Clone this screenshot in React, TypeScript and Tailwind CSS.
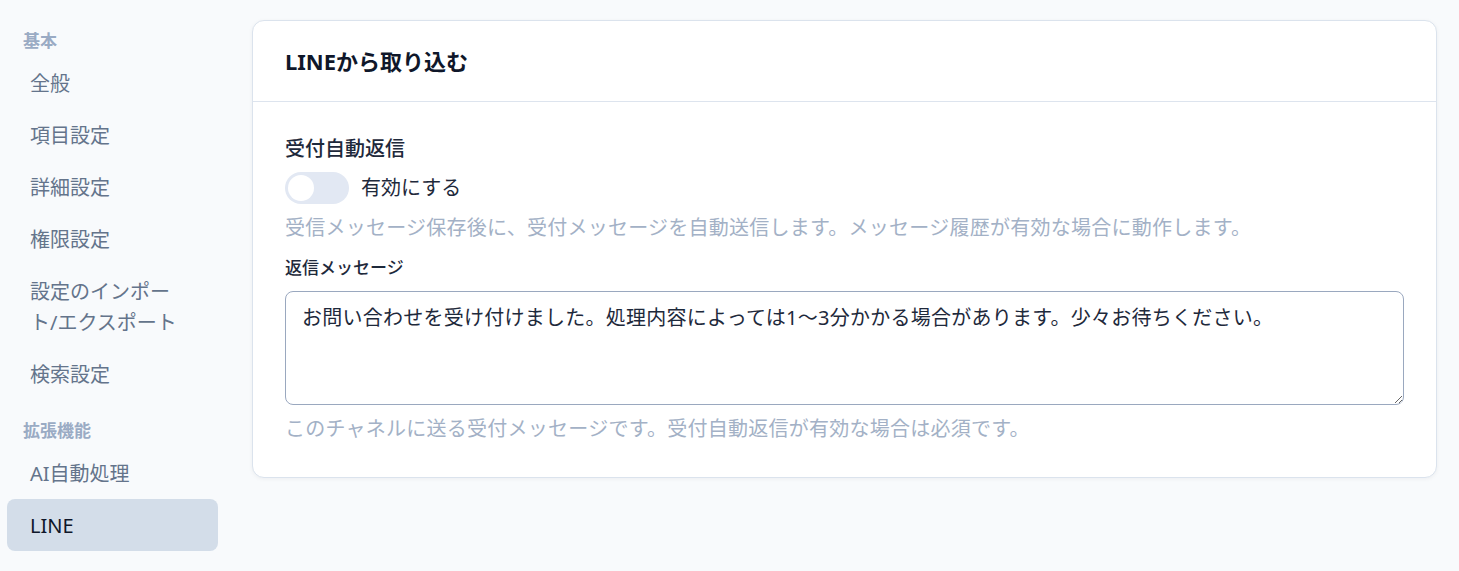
import React, { useState } from "react";

const FONT = { fontFamily: '"Noto Sans", "Noto Sans CJK JP", sans-serif' };

type NavItem = { label: string; active?: boolean };
type NavSection = { title: string; items: NavItem[] };

const sections: NavSection[] = [
  {
    title: "基本",
    items: [
      { label: "全般" },
      { label: "項目設定" },
      { label: "詳細設定" },
      { label: "権限設定" },
      { label: "設定のインポート/エクスポート" },
      { label: "検索設定" },
    ],
  },
  {
    title: "拡張機能",
    items: [{ label: "AI自動処理" }, { label: "LINE", active: true }],
  },
];

function Sidebar() {
  return (
    <nav className="w-[225px] shrink-0 px-[7px] pt-[29px]">
      {sections.map((s, i) => (
        <div key={s.title} className={i > 0 ? "mt-[19px]" : ""}>
          <div className="px-4 text-[17px] leading-[24px] font-bold text-[#9aabc4] mb-1">
            {s.title}
          </div>
          <ul>
            {s.items.map((it) => (
              <li key={it.label}>
                <a
                  className={
                    "block rounded-lg px-[23px] py-[10.5px] text-[20px] leading-[31px] " +
                    (it.active
                      ? "bg-[#d3dde9] text-[#0f172a]"
                      : "text-[#64748b]")
                  }
                >
                  {it.label}
                </a>
              </li>
            ))}
          </ul>
        </div>
      ))}
    </nav>
  );
}

function Toggle({ on, onChange }: { on: boolean; onChange: (v: boolean) => void }) {
  return (
    <button
      type="button"
      onClick={() => onChange(!on)}
      className={
        "relative h-8 w-16 rounded-full transition-colors " +
        (on ? "bg-[#3b82f6]" : "bg-[#e2e8f3]")
      }
    >
      <span
        className={
          "absolute top-[3px] h-[26px] w-[26px] rounded-full bg-white transition-all " +
          (on ? "left-[35px]" : "left-[3px]")
        }
      />
    </button>
  );
}

export default function App() {
  const [enabled, setEnabled] = useState(false);
  const [message, setMessage] = useState(
    "お問い合わせを受け付けました。処理内容によっては1〜3分かかる場合があります。少々お待ちください。"
  );

  return (
    <div className="flex min-h-[571px] bg-[#f8fafc]" style={FONT}>
      <Sidebar />
      <main className="flex-1 pl-[27px] pr-[22px] pt-5">
        <section className="rounded-xl border border-[#dbe3ed] bg-white shadow-[0_1px_4px_rgba(15,23,42,0.05)]">
          <header className="flex h-[81px] items-center border-b border-[#dde4ee] px-8">
            <h2 className="text-[22px] font-bold text-[#0f172a]">LINEから取り込む</h2>
          </header>
          <div className="px-8 pt-8 pb-[33px]">
            <div className="text-[20px] leading-[30px] font-medium text-[#1e293b]">
              受付自動返信
            </div>
            <label className="mt-2 flex items-center gap-3">
              <Toggle on={enabled} onChange={setEnabled} />
              <span className="text-[20px] leading-[30px] text-[#1e293b]">有効にする</span>
            </label>
            <p className="mt-[9px] text-[20px] leading-[30px] tracking-[0.25px] text-[#a3b1c6]">
              受信メッセージ保存後に、受付メッセージを自動送信します。メッセージ履歴が有効な場合に動作します。
            </p>
            <div className="mt-[13px] text-[17px] leading-[24px] font-medium text-[#1e293b]">
              返信メッセージ
            </div>
            <textarea
              value={message}
              onChange={(e) => setMessage(e.target.value)}
              className="mt-[11px] block h-[114px] w-full rounded-lg border border-[#9aa8bf] px-[16px] pt-[11px] text-[20px] leading-[30px] tracking-[0.25px] text-[#1e293b] outline-none"
            />
            <p className="mt-[9px] text-[20px] leading-[30px] tracking-[0.25px] text-[#a3b1c6]">
              このチャネルに送る受付メッセージです。受付自動返信が有効な場合は必須です。
            </p>
          </div>
        </section>
      </main>
    </div>
  );
}
